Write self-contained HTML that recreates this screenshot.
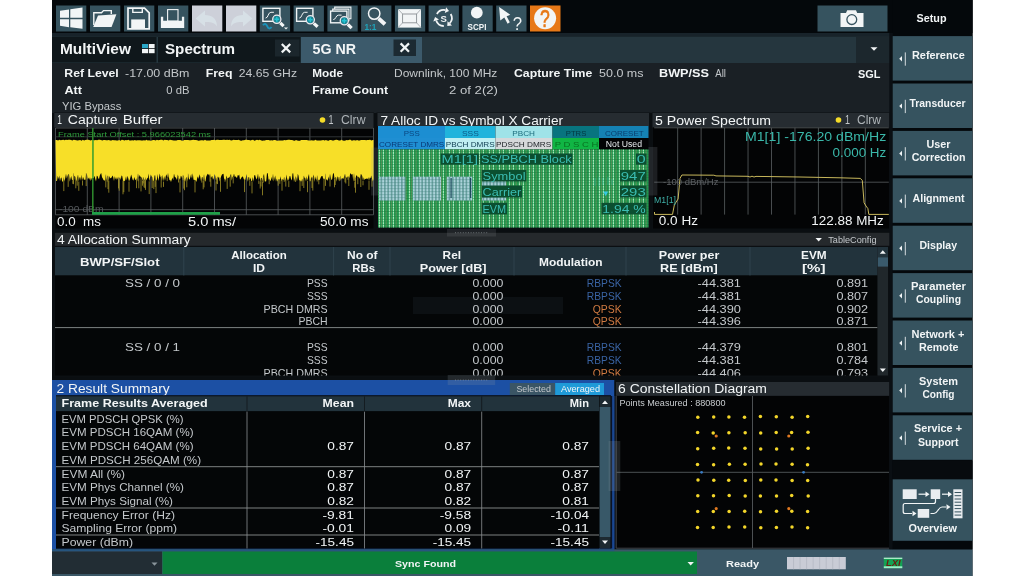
<!DOCTYPE html>
<html><head><meta charset="utf-8"><title>5G NR</title>
<style>
html,body{margin:0;padding:0;background:#fff;}
body{width:1024px;height:576px;overflow:hidden;}
svg{display:block;font-family:"Liberation Sans",sans-serif;will-change:transform;}
text{white-space:pre;}
</style></head><body>
<svg width="1024" height="576" viewBox="0 0 1024 576" shape-rendering="auto">
<rect x="0" y="0" width="1024" height="576" fill="#ffffff" />
<rect x="52" y="0" width="920.5" height="576" fill="#0a0e11" />
<rect x="52" y="0" width="920.5" height="33" fill="#04080b" />
<rect x="52" y="33" width="841" height="3.5" fill="#18232a" />
<rect x="56" y="5.5" width="30.3" height="26" fill="#36535f" />
<rect x="90" y="5.5" width="30.3" height="26" fill="#36535f" />
<rect x="124" y="5.5" width="30.3" height="26" fill="#36535f" />
<rect x="158" y="5.5" width="30.3" height="26" fill="#36535f" />
<rect x="192" y="5.5" width="30.3" height="26" fill="#cdd0d9" />
<rect x="226" y="5.5" width="30.3" height="26" fill="#cdd0d9" />
<rect x="259.8" y="5.5" width="30.3" height="26" fill="#36535f" />
<rect x="293.6" y="5.5" width="30.3" height="26" fill="#36535f" />
<rect x="327.4" y="5.5" width="30.3" height="26" fill="#36535f" />
<rect x="361.1" y="5.5" width="30.3" height="26" fill="#36535f" />
<rect x="394.9" y="5.5" width="30.3" height="26" fill="#36535f" />
<rect x="428.6" y="5.5" width="30.3" height="26" fill="#36535f" />
<rect x="462.4" y="5.5" width="30.3" height="26" fill="#36535f" />
<rect x="496.2" y="5.5" width="30.3" height="26" fill="#36535f" />
<rect x="530" y="5.5" width="30.5" height="26" fill="#e77817" />
<rect x="817.5" y="5.5" width="70" height="26" fill="#36535f" />
<path fill="#f2f5f6" d="M60 10.8L69 9.5V17.8H60zM60 19.2H69V27.2L60 25.8zM70.3 9.3L82.5 7.5V17.8H70.3zM70.3 19.2H82.5V28.8L70.3 27.3z"/>
<path fill="none" stroke="#f2f5f6" stroke-width="1.4" d="M93.8 25V12.8H101.5L103.5 10.6H111.3V14"/>
<path fill="#f2f5f6" d="M93.2 26.9L98 15.6L116.4 14.2L111.6 26.9z"/>
<path fill="none" stroke="#f2f5f6" stroke-width="1.7" d="M128 8.2H144.5L149.2 12.8V28.8H128z"/>
<path fill="none" stroke="#f2f5f6" stroke-width="1.4" d="M132.8 8.2V12.4H142.3V8.2"/>
<rect x="131.2" y="19.4" width="13.8" height="9.6" fill="#f2f5f6"/>
<path fill="#f2f5f6" d="M160.9 16.7H163.2V20.8H181.9V16.7H184.2V27.9H160.9z"/>
<rect x="167.6" y="9.6" width="10.4" height="11.5" fill="none" stroke="#f2f5f6" stroke-width="1.1"/>
<path fill="#d7e0e6" d="M195.6 18.5L205 10.6V15C212 15 216.8 18.5 217 26.4C214.5 22.6 211 21.8 205 22V26.4z"/>
<path fill="#d7e0e6" d="M252.4 18.5L243 10.6V15C236 15 231.2 18.5 231 26.4C233.5 22.6 237 21.8 243 22V26.4z"/>
<rect x="262.9" y="8.3" width="17.0" height="13.0" fill="none" stroke="#f2f5f6" stroke-width="1.4"/>
<path fill="none" stroke="#f2f5f6" stroke-width="1" d="M265.59999999999997 18.1C268.4 18.1 267.9 12.3 270.9 12.3H273.9"/>
<line x1="280.325" y1="22.825000000000003" x2="283.6" y2="26.1" stroke="#f2f5f6" stroke-width="3.2" stroke-linecap="butt"/>
<circle cx="276.8" cy="19.3" r="4.1000000000000005" fill="#1c8796" stroke="#f0e8ee" stroke-width="1.3"/>
<path stroke="#22c4d4" stroke-width="1.5" d="M274.45 19.3H279.15000000000003M276.8 16.95V21.650000000000002"/>
<path fill="none" stroke="#1a92ba" stroke-width="1.9" d="M263 25.2C264.5 23.2 266.2 23.6 267.2 26.2S270 29.2 271.6 27"/>
<path fill="#f2f5f6" d="M283.9 27.4H288.1L286 29.4z"/>
<rect x="296.6" y="8.3" width="16.299999999999955" height="13.0" fill="none" stroke="#f2f5f6" stroke-width="1.4"/>
<path fill="none" stroke="#f2f5f6" stroke-width="1" d="M299.3 18.1C302.1 18.1 301.6 12.3 304.6 12.3H307.6"/>
<line x1="313.825" y1="23.325000000000003" x2="317.6" y2="26.8" stroke="#f2f5f6" stroke-width="3.2" stroke-linecap="butt"/>
<circle cx="310.3" cy="19.8" r="4.1000000000000005" fill="#1c8796" stroke="#f0e8ee" stroke-width="1.3"/>
<path stroke="#22c4d4" stroke-width="1.5" d="M307.95 19.8H312.65000000000003M310.3 17.45V22.150000000000002"/>
<path fill="none" stroke="#f2f5f6" stroke-width="1.1" d="M334.7 9V7.1H350.9V18.8H349M332.7 11V9.1H348.9V20.8H347"/>
<rect x="330.6" y="11.1" width="16.299999999999955" height="11.700000000000001" fill="none" stroke="#f2f5f6" stroke-width="1.4"/>
<path fill="none" stroke="#f2f5f6" stroke-width="1" d="M333.3 19.6C336.1 19.6 335.6 15.1 338.6 15.1H341.6"/>
<line x1="347.825" y1="24.325000000000003" x2="351.6" y2="28.2" stroke="#f2f5f6" stroke-width="3.2" stroke-linecap="butt"/>
<circle cx="344.3" cy="20.8" r="4.1000000000000005" fill="#1c8796" stroke="#f0e8ee" stroke-width="1.3"/>
<path stroke="#22c4d4" stroke-width="1.5" d="M341.95 20.8H346.65000000000003M344.3 18.45V23.150000000000002"/>
<line x1="378.6" y1="18.4" x2="385" y2="24.2" stroke="#f2f5f6" stroke-width="4" stroke-linecap="butt"/>
<circle cx="374.2" cy="13.6" r="5.7" fill="none" stroke="#f2f5f6" stroke-width="1.5"/>
<text x="364.4" y="29.9" font-size="9.2" font-weight="bold" fill="#1fa4ba" textLength="12" lengthAdjust="spacingAndGlyphs">1:1</text>
<rect x="398.1" y="9.1" width="22.9" height="18.5" fill="#f2f5f6"/>
<rect x="402.6" y="14" width="14" height="8.8" fill="none" stroke="#8a9094" stroke-width="0.9"/>
<path stroke="#9aa0a4" stroke-width="0.8" d="M398.1 9.1L402.6 14M421 9.1L416.6 14M398.1 27.6L402.6 22.8M421 27.6L416.6 22.8"/>
<path fill="none" stroke="#f2f5f6" stroke-width="1.8" d="M436.9 14.0A8 8 0 0 1 445.5 10.2"/>
<path fill="#f2f5f6" d="M449.0 10.9L446.1 7.2L444.8 13.1z"/>
<path fill="none" stroke="#f2f5f6" stroke-width="1.8" d="M450.7 14.0A8 8 0 0 1 449.7 23.4"/>
<path fill="#f2f5f6" d="M447.3 26.0L452.0 25.4L447.5 21.3z"/>
<path fill="none" stroke="#f2f5f6" stroke-width="1.8" d="M443.8 26.0A8 8 0 0 1 436.2 20.5"/>
<path fill="#f2f5f6" d="M435.1 17.0L433.3 21.4L439.0 19.5z"/>
<text x="440.6" y="21.6" font-size="9.5" font-weight="bold" fill="#f2f5f6">S</text>
<circle cx="476.8" cy="12.7" r="5.9" fill="#f2f5f6"/>
<text x="467.6" y="29.6" font-size="9.5" font-weight="bold" fill="#f2f5f6" textLength="18.8" lengthAdjust="spacingAndGlyphs">SCPI</text>
<path fill="#f2f5f6" d="M499.1 7.1L510.3 14.8L506.6 16.3L509.8 22.3L507.6 23.8L504.3 17.6L500.3 20.4z"/>
<text x="512.8" y="29.6" font-size="18.5" fill="#f2f5f6" textLength="9.3" lengthAdjust="spacingAndGlyphs">?</text>
<circle cx="545.1" cy="18.3" r="11" fill="#f2f5f6"/>
<text x="540.1" y="26.9" font-size="23" fill="#e77817" stroke="#e77817" stroke-width="0.6" textLength="9.8" lengthAdjust="spacingAndGlyphs">?</text>
<path fill="#f2f5f6" d="M840.5 13H846L847.2 10.2H856L857.2 13H863.5V27H840.5z"/>
<circle cx="851.8" cy="19.6" r="4.9" fill="none" stroke="#36535f" stroke-width="1.3"/>
<rect x="52" y="36.5" width="841" height="26.5" fill="#25363e" />
<rect x="52" y="37" width="104.5" height="25.5" fill="#0f171b" />
<rect x="158" y="37" width="142.5" height="25.5" fill="#0f171b" />
<rect x="301" y="37" width="121" height="26.5" fill="#3c5a6b" />
<rect x="275" y="39.5" width="24.5" height="17" fill="#1b262c" />
<rect x="393.5" y="39.5" width="22.5" height="16.5" fill="#1c2a32" />
<rect x="856" y="36.5" width="37" height="26.5" fill="#1c272d" />
<text x="60" y="53.9" font-size="14.5" fill="#f2f5f6" font-weight="bold" textLength="71" lengthAdjust="spacingAndGlyphs" >MultiView</text>
<text x="165" y="53.9" font-size="14.5" fill="#f2f5f6" font-weight="bold" textLength="70" lengthAdjust="spacingAndGlyphs" >Spectrum</text>
<text x="312.5" y="53.9" font-size="14.5" fill="#f2f5f6" font-weight="bold" textLength="43.5" lengthAdjust="spacingAndGlyphs" >5G NR</text>
<rect x="142" y="44" width="6" height="4.2" fill="#2aa8c8" />
<rect x="148.8" y="44" width="5.8" height="4.2" fill="#f2f5f6" />
<rect x="142" y="49" width="6" height="4.2" fill="#f2f5f6" />
<rect x="148.8" y="49" width="5.8" height="4.2" fill="#f2f5f6" />
<line x1="281.8" y1="44" x2="290.2" y2="52.4" stroke="#f2f5f6" stroke-width="2.2" />
<line x1="281.8" y1="52.4" x2="290.2" y2="44" stroke="#f2f5f6" stroke-width="2.2" />
<line x1="400.6" y1="43.4" x2="409" y2="51.8" stroke="#f2f5f6" stroke-width="2.2" />
<line x1="400.6" y1="51.8" x2="409" y2="43.4" stroke="#f2f5f6" stroke-width="2.2" />
<path d="M870.5 47.2h7l-3.5 3.6z" fill="#f2f5f6"/>
<rect x="52" y="63" width="841" height="50" fill="#1a2025" />
<text x="64.3" y="77.3" font-size="11" fill="#f2f5f6" font-weight="bold" textLength="54.4" lengthAdjust="spacingAndGlyphs" >Ref Level</text>
<text x="125" y="77.3" font-size="11" fill="#c4c8cb" textLength="64.3" lengthAdjust="spacingAndGlyphs" >-17.00 dBm</text>
<text x="205.8" y="77.3" font-size="11" fill="#f2f5f6" font-weight="bold" textLength="26.7" lengthAdjust="spacingAndGlyphs" >Freq</text>
<text x="238.8" y="77.3" font-size="11" fill="#c4c8cb" textLength="58.2" lengthAdjust="spacingAndGlyphs" >24.65 GHz</text>
<text x="312.3" y="77.3" font-size="11" fill="#f2f5f6" font-weight="bold" textLength="30.7" lengthAdjust="spacingAndGlyphs" >Mode</text>
<text x="394" y="77.3" font-size="11" fill="#c4c8cb" textLength="103.3" lengthAdjust="spacingAndGlyphs" >Downlink, 100 MHz</text>
<text x="514" y="77.3" font-size="11" fill="#f2f5f6" font-weight="bold" textLength="78.3" lengthAdjust="spacingAndGlyphs" >Capture Time</text>
<text x="599" y="77.3" font-size="11" fill="#c4c8cb" textLength="44.5" lengthAdjust="spacingAndGlyphs" >50.0 ms</text>
<text x="659" y="77.3" font-size="11" fill="#f2f5f6" font-weight="bold" textLength="50" lengthAdjust="spacingAndGlyphs" >BWP/SS</text>
<text x="715.3" y="77.3" font-size="11" fill="#c4c8cb" textLength="10.7" lengthAdjust="spacingAndGlyphs" >All</text>
<text x="858" y="77.5" font-size="11" fill="#f2f5f6" font-weight="bold" textLength="22.5" lengthAdjust="spacingAndGlyphs" >SGL</text>
<text x="64.5" y="94" font-size="11" fill="#f2f5f6" font-weight="bold" textLength="17.5" lengthAdjust="spacingAndGlyphs" >Att</text>
<text x="166.3" y="94" font-size="11" fill="#c4c8cb" textLength="23.2" lengthAdjust="spacingAndGlyphs" >0 dB</text>
<text x="312.3" y="94" font-size="11" fill="#f2f5f6" font-weight="bold" textLength="75.7" lengthAdjust="spacingAndGlyphs" >Frame Count</text>
<text x="449" y="94" font-size="11" fill="#c4c8cb" textLength="49" lengthAdjust="spacingAndGlyphs" >2 of 2(2)</text>
<text x="62" y="109.8" font-size="11" fill="#c4c8cb" textLength="59.3" lengthAdjust="spacingAndGlyphs" >YIG Bypass</text>
<!--BODY-->
<rect x="54" y="112.5" width="320" height="116.5" fill="#0b0f12" />
<rect x="54.3" y="113" width="319.2" height="14.5" fill="#262c31" />
<rect x="55.5" y="127.5" width="318" height="101" fill="#030405" />
<text x="57.3" y="124.3" font-size="12" fill="#f2f5f6" textLength="4.7" lengthAdjust="spacingAndGlyphs" >1</text>
<text x="67.8" y="124.3" font-size="12" fill="#f2f5f6" textLength="49.8" lengthAdjust="spacingAndGlyphs" >Capture</text>
<text x="122.8" y="124.3" font-size="12" fill="#f2f5f6" textLength="39.8" lengthAdjust="spacingAndGlyphs" >Buffer</text>
<circle cx="322.5" cy="120" r="2.8" fill="#f5dc28"/>
<text x="328.5" y="124" font-size="12" fill="#c4c8cb" textLength="5" lengthAdjust="spacingAndGlyphs" >1</text>
<text x="341" y="124" font-size="12" fill="#aeb4b8" textLength="24.5" lengthAdjust="spacingAndGlyphs" >Clrw</text>
<line x1="55.5" y1="128" x2="55.5" y2="214.8" stroke="#5a5f62" stroke-width="0.8" />
<line x1="87.3" y1="128" x2="87.3" y2="214.8" stroke="#5a5f62" stroke-width="0.8" />
<line x1="119.1" y1="128" x2="119.1" y2="214.8" stroke="#5a5f62" stroke-width="0.8" />
<line x1="150.9" y1="128" x2="150.9" y2="214.8" stroke="#5a5f62" stroke-width="0.8" />
<line x1="182.7" y1="128" x2="182.7" y2="214.8" stroke="#5a5f62" stroke-width="0.8" />
<line x1="214.5" y1="128" x2="214.5" y2="214.8" stroke="#5a5f62" stroke-width="0.8" />
<line x1="246.3" y1="128" x2="246.3" y2="214.8" stroke="#5a5f62" stroke-width="0.8" />
<line x1="278.1" y1="128" x2="278.1" y2="214.8" stroke="#5a5f62" stroke-width="0.8" />
<line x1="309.9" y1="128" x2="309.9" y2="214.8" stroke="#5a5f62" stroke-width="0.8" />
<line x1="341.7" y1="128" x2="341.7" y2="214.8" stroke="#5a5f62" stroke-width="0.8" />
<line x1="373.5" y1="128" x2="373.5" y2="214.8" stroke="#5a5f62" stroke-width="0.8" />
<line x1="55.5" y1="128" x2="373.5" y2="128" stroke="#5a5f62" stroke-width="0.8" />
<line x1="55.5" y1="136.8" x2="373.5" y2="136.8" stroke="#3a3f42" stroke-width="0.8" />
<line x1="55.5" y1="209.7" x2="373.5" y2="209.7" stroke="#5a5f62" stroke-width="0.8" />
<line x1="55.5" y1="214.8" x2="373.5" y2="214.8" stroke="#5a5f62" stroke-width="0.8" />
<polygon fill="#f7df28" points="55.5,140.0 56.8,139.9 58.1,140.4 59.4,139.8 60.7,140.2 62.0,140.1 63.3,139.8 64.6,140.2 65.9,139.7 67.2,140.1 68.5,139.8 69.8,139.8 71.1,140.1 72.4,140.5 73.7,139.8 75.0,139.9 76.3,140.3 77.6,140.6 78.9,140.3 80.2,140.1 81.5,140.7 82.8,139.7 84.1,140.6 85.4,140.0 86.7,139.8 88.0,139.8 89.3,140.0 90.6,140.5 91.9,139.9 93.2,140.3 94.5,140.3 95.8,140.1 97.1,140.2 98.4,139.8 99.7,139.8 101.0,139.9 102.3,140.4 103.6,140.1 104.9,140.0 106.2,140.3 107.5,140.2 108.8,140.0 110.1,140.5 111.4,140.4 112.7,139.9 114.0,140.3 115.3,140.2 116.6,140.6 117.9,140.4 119.2,140.0 120.5,140.7 121.8,139.8 123.1,140.1 124.4,140.5 125.7,139.9 127.0,140.2 128.3,139.7 129.6,140.4 130.9,140.5 132.2,140.3 133.5,140.6 134.8,140.0 136.1,140.4 137.4,140.3 138.7,140.3 140.0,140.2 141.3,140.5 142.6,140.6 143.9,140.2 145.2,140.4 146.5,139.8 147.8,140.4 149.1,140.3 150.4,140.7 151.7,140.5 153.0,140.0 154.3,140.1 155.6,140.4 156.9,139.7 158.2,140.2 159.5,139.9 160.8,139.8 162.1,139.8 163.4,140.5 164.7,139.8 166.0,139.9 167.3,140.1 168.6,140.6 169.9,139.8 171.2,140.1 172.5,140.2 173.8,140.6 175.1,140.5 176.4,140.6 177.7,140.0 179.0,140.1 180.3,140.1 181.6,140.6 182.9,140.7 184.2,139.9 185.5,139.9 186.8,139.9 188.1,139.9 189.4,140.2 190.7,140.3 192.0,140.0 193.3,139.7 194.6,140.1 195.9,140.1 197.2,140.3 198.5,140.7 199.8,140.4 201.1,140.2 202.4,140.3 203.7,140.4 205.0,139.8 206.3,140.6 207.6,140.5 208.9,140.6 210.2,140.5 211.5,140.1 212.8,140.1 214.1,139.8 215.4,140.3 216.7,139.8 218.0,139.8 219.3,139.9 220.6,139.9 221.9,140.0 223.2,139.8 224.5,139.7 225.8,139.9 227.1,139.8 228.4,140.1 229.7,139.7 231.0,140.6 232.3,140.3 233.6,139.8 234.9,140.0 236.2,140.0 237.5,140.1 238.8,139.8 240.1,140.5 241.4,140.7 242.7,140.2 244.0,140.2 245.3,139.8 246.6,139.8 247.9,140.0 249.2,140.0 250.5,140.5 251.8,139.9 253.1,139.7 254.4,140.7 255.7,140.2 257.0,139.8 258.3,140.2 259.6,139.7 260.9,140.2 262.2,140.7 263.5,140.6 264.8,140.4 266.1,140.0 267.4,140.1 268.7,139.9 270.0,140.5 271.3,140.2 272.6,140.5 273.9,140.0 275.2,139.9 276.5,140.5 277.8,140.7 279.1,140.6 280.4,140.5 281.7,140.5 283.0,140.4 284.3,139.9 285.6,140.2 286.9,140.1 288.2,139.7 289.5,139.7 290.8,140.0 292.1,140.0 293.4,140.4 294.7,140.7 296.0,140.1 297.3,140.6 298.6,140.7 299.9,140.7 301.2,140.1 302.5,139.9 303.8,139.9 305.1,139.9 306.4,139.9 307.7,140.3 309.0,140.6 310.3,140.5 311.6,140.2 312.9,140.4 314.2,140.5 315.5,139.8 316.8,140.4 318.1,140.6 319.4,140.5 320.7,140.5 322.0,140.2 323.3,139.9 324.6,140.5 325.9,140.0 327.2,140.5 328.5,140.7 329.8,140.1 331.1,140.1 332.4,140.6 333.7,140.4 335.0,139.9 336.3,139.8 337.6,139.9 338.9,140.6 340.2,140.5 341.5,139.8 342.8,140.5 344.1,140.7 345.4,140.4 346.7,140.1 348.0,140.2 349.3,139.8 350.6,139.7 351.9,140.7 353.2,140.3 354.5,140.2 355.8,140.6 357.1,140.1 358.4,140.6 359.7,140.5 361.0,139.9 362.3,140.0 363.6,140.0 364.9,139.9 366.2,140.3 367.5,140.0 368.8,140.1 370.1,139.8 371.4,140.6 372.7,140.1 373.5,140.0 373.5,179.3 372.8,181.5 372.0,178.9 371.2,175.5 370.5,178.6 369.8,177.6 369.0,180.6 368.2,177.3 367.5,179.2 366.8,178.4 366.0,178.8 365.2,179.0 364.5,180.0 363.8,177.2 363.0,181.0 362.2,176.0 361.5,174.6 360.8,174.3 360.0,176.9 359.2,178.7 358.5,176.5 357.8,177.7 357.0,175.6 356.2,175.6 355.5,178.8 354.8,181.8 354.0,173.5 353.2,180.8 352.5,174.1 351.8,174.4 351.0,174.3 350.2,173.1 349.5,177.7 348.8,177.2 348.0,176.2 347.2,177.5 346.5,177.4 345.8,177.8 345.0,174.1 344.2,176.2 343.5,178.7 342.8,178.8 342.0,177.7 341.2,179.6 340.5,175.9 339.8,177.2 339.0,181.2 338.2,177.1 337.5,176.5 336.8,181.8 336.0,177.1 335.2,177.8 334.5,178.8 333.8,173.2 333.0,173.6 332.2,178.9 331.5,180.2 330.8,177.6 330.0,174.3 329.2,179.6 328.5,176.4 327.8,180.9 327.0,179.3 326.2,180.0 325.5,173.7 324.8,179.6 324.0,178.7 323.2,178.8 322.5,175.9 321.8,176.0 321.0,176.8 320.2,178.7 319.5,179.9 318.8,179.7 318.0,180.3 317.2,175.6 316.5,180.0 315.8,178.9 315.0,176.3 314.2,181.9 313.5,174.6 312.8,177.2 312.0,179.3 311.2,176.4 310.5,181.3 309.8,181.3 309.0,174.0 308.2,176.4 307.5,181.0 306.8,176.3 306.0,181.4 305.2,178.1 304.5,177.8 303.8,175.8 303.0,181.6 302.2,178.8 301.5,181.2 300.8,181.4 300.0,180.2 299.2,180.4 298.5,175.8 297.8,173.7 297.0,181.8 296.2,177.5 295.5,176.6 294.8,178.7 294.0,182.0 293.2,173.2 292.5,173.5 291.8,180.4 291.0,178.9 290.2,175.9 289.5,176.3 288.8,181.1 288.0,178.1 287.2,181.0 286.5,174.4 285.8,179.3 285.0,180.9 284.2,177.1 283.5,179.9 282.8,179.7 282.0,179.1 281.2,181.5 280.5,176.3 279.8,180.0 279.0,179.3 278.2,179.4 277.5,181.7 276.8,178.6 276.0,181.7 275.2,175.6 274.5,178.2 273.8,181.5 273.0,173.8 272.2,180.7 271.5,176.8 270.8,180.8 270.0,180.4 269.2,178.7 268.5,179.8 267.8,173.4 267.0,173.1 266.2,181.2 265.5,181.6 264.8,181.6 264.0,173.8 263.2,176.6 262.5,181.7 261.8,177.8 261.0,178.3 260.2,181.5 259.5,175.7 258.8,180.5 258.0,173.5 257.2,177.7 256.5,179.5 255.8,177.6 255.0,174.8 254.2,175.7 253.5,181.7 252.8,177.1 252.0,181.5 251.2,180.8 250.5,177.6 249.8,180.6 249.0,177.1 248.2,177.6 247.5,181.9 246.8,174.0 246.0,177.0 245.2,179.9 244.5,179.8 243.8,179.2 243.0,176.8 242.2,176.5 241.5,177.6 240.8,178.8 240.0,179.7 239.2,174.6 238.5,175.8 237.8,174.9 237.0,177.9 236.2,177.2 235.5,176.2 234.8,176.9 234.0,173.5 233.2,176.8 232.5,176.7 231.8,180.7 231.0,173.8 230.2,176.1 229.5,177.3 228.8,177.5 228.0,178.2 227.2,177.9 226.5,175.5 225.8,180.8 225.0,178.5 224.2,179.7 223.5,173.7 222.8,174.0 222.0,174.6 221.2,176.3 220.5,178.6 219.8,181.4 219.0,176.5 218.2,178.1 217.5,176.7 216.8,178.0 216.0,181.3 215.2,175.7 214.5,174.1 213.8,178.2 213.0,179.8 212.2,175.7 211.5,177.0 210.8,178.5 210.0,173.9 209.2,175.8 208.5,174.6 207.8,173.8 207.0,175.0 206.2,176.8 205.5,181.7 204.8,180.6 204.0,174.5 203.2,180.8 202.5,176.9 201.8,177.6 201.0,181.6 200.2,176.6 199.5,174.3 198.8,179.1 198.0,176.2 197.2,178.1 196.5,181.9 195.8,180.5 195.0,180.3 194.2,179.7 193.5,179.8 192.8,173.3 192.0,178.8 191.2,174.3 190.5,176.2 189.8,179.3 189.0,179.6 188.2,173.5 187.5,181.2 186.8,177.2 186.0,177.8 185.2,181.6 184.5,181.4 183.8,177.0 183.0,174.9 182.2,178.8 181.5,176.6 180.8,175.8 180.0,180.2 179.2,178.5 178.5,177.0 177.8,174.5 177.0,180.1 176.2,178.3 175.5,177.2 174.8,176.9 174.0,173.5 173.2,180.3 172.5,177.6 171.8,179.6 171.0,181.9 170.2,180.0 169.5,180.2 168.8,176.9 168.0,173.3 167.2,177.7 166.5,174.3 165.8,175.9 165.0,180.8 164.2,175.9 163.5,181.6 162.8,174.7 162.0,180.9 161.2,176.1 160.5,177.6 159.8,173.6 159.0,177.6 158.2,181.0 157.5,173.9 156.8,180.1 156.0,181.1 155.2,175.5 154.5,175.5 153.8,180.7 153.0,180.9 152.2,177.3 151.5,176.2 150.8,174.4 150.0,177.8 149.2,181.3 148.5,173.5 147.8,178.0 147.0,178.5 146.2,180.4 145.5,177.6 144.8,180.3 144.0,179.3 143.2,177.0 142.5,181.0 141.8,177.6 141.0,177.6 140.2,176.2 139.5,175.0 138.8,178.3 138.0,173.8 137.2,180.0 136.5,178.5 135.8,180.3 135.0,179.2 134.2,177.0 133.5,180.5 132.8,179.9 132.0,177.5 131.2,174.6 130.5,177.1 129.8,179.5 129.0,181.5 128.2,178.0 127.5,175.7 126.8,180.6 126.0,176.2 125.2,180.2 124.5,180.9 123.8,181.7 123.0,180.5 122.2,175.9 121.5,175.6 120.8,180.0 120.0,177.0 119.2,178.9 118.5,176.9 117.8,179.6 117.0,177.0 116.2,179.7 115.5,178.5 114.8,176.3 114.0,181.0 113.2,177.1 112.5,175.5 111.8,177.1 111.0,178.3 110.2,177.9 109.5,175.9 108.8,180.6 108.0,175.6 107.2,177.1 106.5,180.5 105.8,174.6 105.0,180.6 104.2,180.6 103.5,180.0 102.8,178.4 102.0,177.2 101.2,173.1 100.5,174.0 99.8,175.5 99.0,179.2 98.2,177.9 97.5,176.0 96.8,175.7 96.0,181.6 95.2,178.8 94.5,175.7 93.8,177.7 93.0,178.6 92.2,176.9 91.5,179.1 90.8,180.9 90.0,177.3 89.2,179.8 88.5,177.6 87.8,179.6 87.0,174.8 86.2,173.0 85.5,179.8 84.8,179.5 84.0,180.0 83.2,176.9 82.5,180.5 81.8,174.8 81.0,180.8 80.2,177.2 79.5,177.6 78.8,181.6 78.0,174.6 77.2,178.4 76.5,181.6 75.8,178.2 75.0,176.5 74.2,176.3 73.5,173.3 72.8,180.3 72.0,180.1 71.2,176.0 70.5,178.5 69.8,181.8 69.0,174.3 68.2,174.5 67.5,175.9 66.8,178.4 66.0,173.7 65.2,178.2 64.5,181.6 63.8,177.4 63.0,180.9 62.2,181.9 61.5,177.5 60.8,177.9 60.0,181.3 59.2,175.5 58.5,179.3 57.8,175.8 57.0,181.1 56.2,181.0"/>
<path stroke="#b9a62e" stroke-width="0.7" fill="none" d="M372.0 178.9V186.7M369.0 180.6V189.8M363.0 181.0V185.3M360.8 174.3V187.0M357.8 177.7V184.2M355.5 178.8V192.7M354.8 181.8V187.7M354.0 173.5V181.2M348.8 177.2V186.0M348.0 176.2V179.8M345.8 177.8V183.5M345.0 174.1V182.3M340.5 175.9V179.6M339.8 177.2V181.1M335.2 177.8V185.0M334.5 178.8V187.3M330.0 174.3V186.5M325.5 173.7V185.9M324.0 178.7V190.5M318.8 179.7V184.3M317.2 175.6V181.5M312.8 177.2V190.6M312.0 179.3V188.0M307.5 181.0V192.2M303.8 175.8V188.0M302.2 178.8V185.9M300.0 180.2V191.2M295.5 176.6V181.9M288.8 181.1V187.1M285.8 179.3V186.6M284.2 177.1V181.8M282.0 179.1V190.7M279.8 180.0V183.8M278.2 179.4V185.7M269.2 178.7V184.2M263.2 176.6V182.7M262.5 181.7V195.3M261.0 178.3V186.5M260.2 181.5V188.5M258.8 180.5V183.9M252.0 181.5V193.4M249.8 180.6V185.8M249.0 177.1V180.5M244.5 179.8V192.1M233.2 176.8V183.4M230.2 176.1V186.7M227.2 177.9V188.9M225.0 178.5V181.7M220.5 178.6V191.8M217.5 176.7V184.1M216.8 178.0V183.7M216.0 181.3V190.5M210.8 178.5V186.7M210.0 173.9V181.7M204.0 174.5V187.4M203.2 180.8V189.3M201.8 177.6V182.6M195.0 180.3V192.4M191.2 174.3V177.3M188.2 173.5V177.5M186.8 177.2V187.3M184.5 181.4V190.2M183.8 177.0V188.6M183.0 174.9V180.1M180.0 180.2V192.4M178.5 177.0V182.5M168.0 173.3V177.5M167.2 177.7V181.1M163.5 181.6V186.9M161.2 176.1V187.5M156.0 181.1V193.1M155.2 175.5V186.9M153.8 180.7V189.1M152.2 177.3V188.0M149.2 181.3V194.1M145.5 177.6V189.9M144.8 180.3V188.1M144.0 179.3V187.3M143.2 177.0V183.4M142.5 181.0V185.7M141.0 177.6V191.4M138.8 178.3V188.3M138.0 173.8V181.2M136.5 178.5V188.2M129.0 181.5V191.7M123.8 181.7V192.2M123.0 180.5V194.3M119.2 178.9V190.7M118.5 176.9V188.4M108.8 180.6V192.7M108.0 175.6V189.1M107.2 177.1V181.7M105.8 174.6V187.4M86.2 173.0V186.1M82.5 180.5V185.5M78.8 181.6V190.8M77.2 178.4V185.7M75.8 178.2V188.3M75.0 176.5V179.5M73.5 173.3V184.2M72.8 180.3V183.8M68.2 174.5V186.9M63.8 177.4V191.1"/>
<text x="58" y="136.9" font-size="7.8" fill="#2f9a3c" textLength="153" lengthAdjust="spacingAndGlyphs" >Frame Start Offset : 5.966023542 ms</text>
<text x="59" y="212.3" font-size="9" fill="#54585b" textLength="44.5" lengthAdjust="spacingAndGlyphs" >-100 dBm</text>
<line x1="92.8" y1="128" x2="92.8" y2="214.5" stroke="#2f8c2e" stroke-width="1.5" />
<line x1="92.8" y1="140" x2="92.8" y2="178" stroke="#5cae2c" stroke-width="1.5" />
<line x1="92" y1="213.3" x2="220" y2="213.3" stroke="#1fa048" stroke-width="2.8" />
<text x="57" y="225.5" font-size="12" fill="#f2f5f6" textLength="44" lengthAdjust="spacingAndGlyphs" >0.0  ms</text>
<text x="188" y="225.5" font-size="12" fill="#f2f5f6" textLength="48" lengthAdjust="spacingAndGlyphs" >5.0 ms/</text>
<text x="320" y="225.5" font-size="12" fill="#f2f5f6" textLength="48.5" lengthAdjust="spacingAndGlyphs" >50.0 ms</text>
<rect x="376.5" y="112.5" width="274" height="116.5" fill="#0b0f12" />
<rect x="377.5" y="113" width="271.5" height="13" fill="#262c31" />
<text x="380.5" y="124.5" font-size="12" fill="#f2f5f6" textLength="182.5" lengthAdjust="spacingAndGlyphs" >7 Alloc ID vs Symbol X Carrier</text>
<rect x="378" y="126" width="67" height="12" fill="#1c8ed2" />
<rect x="445" y="126" width="50.5" height="12" fill="#20b4dc" />
<rect x="495.5" y="126" width="57" height="12" fill="#9fe3e8" />
<rect x="552.5" y="126" width="46.5" height="12" fill="#08747f" />
<rect x="599" y="126" width="49.5" height="12" fill="#1582b4" />
<rect x="378" y="138" width="67" height="11.5" fill="#1f8fd3" />
<rect x="445" y="138" width="50.5" height="11.5" fill="#bfeff2" />
<rect x="495.5" y="138" width="57" height="11.5" fill="#d6d8da" />
<rect x="552.5" y="138" width="46.5" height="11.5" fill="#10b544" />
<rect x="599" y="138" width="49.5" height="11.5" fill="#030405" />
<defs>
<pattern id="gv" x="378" y="149.5" width="10" height="2.6" patternUnits="userSpaceOnUse">
<rect x="0.9" y="0" width="1.1" height="2.6" fill="#6cc88c"/>
<rect x="4.9" y="0" width="1.1" height="2.6" fill="#6cc88c"/>
<rect x="0.9" y="0.2" width="1.1" height="1.3" fill="#c4f2cc"/>
<rect x="4.9" y="0.2" width="1.1" height="1.3" fill="#c4f2cc"/>
<rect x="2.8" y="0" width="1.2" height="2.6" fill="#7a8f60" fill-opacity="0.6"/>
<rect x="7.6" y="0" width="1.2" height="2.6" fill="#7a8f60" fill-opacity="0.6"/>
</pattern>
<pattern id="gh" x="378" y="149.5" width="10" height="2.6" patternUnits="userSpaceOnUse">
<rect x="0" y="1.9" width="10" height="0.7" fill="#043a18" fill-opacity="0.22"/>
</pattern>
<pattern id="sv" x="378" y="176.6" width="3.4" height="3" patternUnits="userSpaceOnUse">
<rect x="0" y="0" width="3.4" height="3" fill="#3d7f7a"/>
<rect x="0.5" y="0.4" width="2.4" height="2.1" fill="#c6e7f1"/>
</pattern>
</defs>
<rect x="378" y="149.5" width="270.5" height="78" fill="#1f9a4e"/>
<rect x="378" y="149.5" width="270.5" height="78" fill="url(#gv)"/>
<rect x="378" y="149.5" width="270.5" height="78" fill="url(#gh)"/>
<rect x="379" y="176.6" width="26.5" height="24" fill="url(#sv)"/>
<rect x="412.7" y="176.6" width="28.30000000000001" height="24" fill="url(#sv)"/>
<rect x="446.7" y="176.6" width="25.600000000000023" height="24" fill="url(#sv)"/>
<rect x="482" y="176.6" width="24" height="24" fill="url(#sv)"/>
<rect x="450.5" y="178" width="1.2" height="20" fill="#1c4a5a"/><rect x="470" y="178" width="1.2" height="20" fill="#1c4a5a"/>
<text x="403.8" y="135.5" font-size="8" fill="#0a4680" textLength="15.9" lengthAdjust="spacingAndGlyphs" >PSS</text>
<text x="461.9" y="135.5" font-size="8" fill="#0a5a88" textLength="16.9" lengthAdjust="spacingAndGlyphs" >SSS</text>
<text x="512.3" y="135.5" font-size="8" fill="#1d6e7e" textLength="22.7" lengthAdjust="spacingAndGlyphs" >PBCH</text>
<text x="565.8" y="135.5" font-size="8" fill="#033840" textLength="20.5" lengthAdjust="spacingAndGlyphs" >PTRS</text>
<text x="604.9" y="135.5" font-size="8" fill="#0a4070" textLength="38.8" lengthAdjust="spacingAndGlyphs" >CORESET</text>
<text x="379" y="146.8" font-size="8" fill="#0a3a78" textLength="65.3" lengthAdjust="spacingAndGlyphs" >CORESET DMRS</text>
<text x="445.8" y="146.8" font-size="8" fill="#0f3c50" textLength="48.9" lengthAdjust="spacingAndGlyphs" >PBCH DMRS</text>
<text x="496" y="146.8" font-size="8" fill="#23272b" textLength="55.3" lengthAdjust="spacingAndGlyphs" >PDSCH DMRS</text>
<text x="554.7" y="146.8" font-size="8" fill="#087020" textLength="43.8" lengthAdjust="spacingAndGlyphs" >P D S C H</text>
<text x="605.8" y="146.8" font-size="8.5" fill="#e8ecee" textLength="36.2" lengthAdjust="spacingAndGlyphs" >Not Used</text>
<rect x="440.7" y="153.5" width="38.1" height="11.2" fill="#0b4f30" />
<text x="441.5" y="163" font-size="11.2" fill="#3bbdb2" textLength="36.5" lengthAdjust="spacingAndGlyphs" >M1[1]</text>
<rect x="480.3" y="153.5" width="92.2" height="11.2" fill="#0b4f30" />
<text x="481.1" y="163" font-size="11.2" fill="#3bbdb2" textLength="90.6" lengthAdjust="spacingAndGlyphs" >SS/PBCH Block</text>
<rect x="636" y="153.5" width="10.5" height="11.2" fill="#0b4f30" />
<text x="636.8" y="163" font-size="11.2" fill="#3bbdb2" textLength="8.9" lengthAdjust="spacingAndGlyphs" >0</text>
<rect x="481.8" y="170" width="44.5" height="11.5" fill="#0b4f30" />
<text x="482.6" y="179.8" font-size="11.2" fill="#3bbdb2" textLength="42.9" lengthAdjust="spacingAndGlyphs" >Symbol</text>
<rect x="620" y="170" width="26.5" height="11.5" fill="#0b4f30" />
<text x="620.8" y="179.8" font-size="11.2" fill="#3bbdb2" textLength="24.9" lengthAdjust="spacingAndGlyphs" >947</text>
<rect x="481.8" y="185.6" width="40.2" height="11.9" fill="#0b4f30" />
<text x="482.6" y="195.8" font-size="11.2" fill="#3bbdb2" textLength="38.6" lengthAdjust="spacingAndGlyphs" >Carrier</text>
<rect x="620" y="185.6" width="26.5" height="11.9" fill="#0b4f30" />
<text x="620.8" y="195.8" font-size="11.2" fill="#3bbdb2" textLength="24.9" lengthAdjust="spacingAndGlyphs" >293</text>
<rect x="481.8" y="202.7" width="25.2" height="11.7" fill="#0b4f30" />
<text x="482.6" y="212.7" font-size="11.2" fill="#3bbdb2" textLength="23.6" lengthAdjust="spacingAndGlyphs" >EVM</text>
<rect x="601.5" y="202.7" width="45" height="11.7" fill="#0b4f30" />
<text x="602.3" y="212.7" font-size="11.2" fill="#3bbdb2" textLength="43.4" lengthAdjust="spacingAndGlyphs" >1.94 %</text>
<rect x="651.5" y="112.5" width="239" height="116.5" fill="#0b0f12" />
<rect x="652.5" y="113" width="237" height="14.5" fill="#262c31" />
<rect x="653" y="127.5" width="236" height="101" fill="#030405" />
<text x="655" y="124.5" font-size="12" fill="#f2f5f6" textLength="116" lengthAdjust="spacingAndGlyphs" >5 Power Spectrum</text>
<circle cx="838.5" cy="120" r="2.8" fill="#f5dc28"/>
<text x="845" y="124" font-size="12" fill="#c4c8cb" textLength="5" lengthAdjust="spacingAndGlyphs" >1</text>
<text x="857" y="124" font-size="12" fill="#aeb4b8" textLength="24" lengthAdjust="spacingAndGlyphs" >Clrw</text>
<!--PSPEC-->
<line x1="677.66" y1="127.8" x2="677.66" y2="214.6" stroke="#5a5f62" stroke-width="0.8" />
<line x1="701.12" y1="127.8" x2="701.12" y2="214.6" stroke="#5a5f62" stroke-width="0.8" />
<line x1="724.58" y1="127.8" x2="724.58" y2="214.6" stroke="#5a5f62" stroke-width="0.8" />
<line x1="748.04" y1="127.8" x2="748.04" y2="214.6" stroke="#5a5f62" stroke-width="0.8" />
<line x1="771.5" y1="127.8" x2="771.5" y2="214.6" stroke="#5a5f62" stroke-width="0.8" />
<line x1="794.96" y1="127.8" x2="794.96" y2="214.6" stroke="#5a5f62" stroke-width="0.8" />
<line x1="818.42" y1="127.8" x2="818.42" y2="214.6" stroke="#5a5f62" stroke-width="0.8" />
<line x1="841.88" y1="127.8" x2="841.88" y2="214.6" stroke="#5a5f62" stroke-width="0.8" />
<line x1="865.34" y1="127.8" x2="865.34" y2="214.6" stroke="#5a5f62" stroke-width="0.8" />
<line x1="654.2" y1="127.8" x2="888.8" y2="127.8" stroke="#5a5f62" stroke-width="0.8" />
<line x1="654.2" y1="182.2" x2="888.8" y2="182.2" stroke="#5a5f62" stroke-width="0.8" />
<polyline fill="none" stroke="#d2c160" stroke-width="0.95" points="654.5,212 654.5,214.4 672.5,214.4 674.4,204.7 678.1,199 680,178.4 681.9,175 713.8,175.2 716,175.9 748,176.3 750,177 752,176.2 754,177 756,176.4 800,177 840,177.8 860.4,178.4 862.3,180.5 864.1,202.8 866,206 867.9,208.6 868.8,214.4 888.8,214.4"/>
<text x="663" y="185.2" font-size="9" fill="#5d6164" textLength="55.5" lengthAdjust="spacingAndGlyphs" >-100 dBm/Hz</text>
<text x="654" y="203" font-size="9" fill="#3fb0a8" textLength="22" lengthAdjust="spacingAndGlyphs" >M1[1]</text>
<text x="745" y="140.8" font-size="12" fill="#3ab8aa" textLength="141.3" lengthAdjust="spacingAndGlyphs" >M1[1] -176.20 dBm/Hz</text>
<text x="832.5" y="157.3" font-size="12" fill="#3ab8aa" textLength="53.8" lengthAdjust="spacingAndGlyphs" >0.000 Hz</text>
<text x="658.8" y="225.3" font-size="12" fill="#f2f5f6" textLength="39.2" lengthAdjust="spacingAndGlyphs" >0.0 Hz</text>
<text x="811.3" y="225.3" font-size="12" fill="#f2f5f6" textLength="72.5" lengthAdjust="spacingAndGlyphs" >122.88 MHz</text>
<rect x="54" y="232.5" width="837" height="144.5" fill="#0b0f12" />
<rect x="55" y="232.8" width="835.5" height="13" fill="#25292c" />
<text x="57" y="243.6" font-size="12" fill="#f2f5f6" textLength="133.8" lengthAdjust="spacingAndGlyphs" >4 Allocation Summary</text>
<path d="M815.5 238h6.4l-3.2 3.4z" fill="#f2f5f6"/>
<text x="828.3" y="243" font-size="9" fill="#c4c8cb" textLength="48.2" lengthAdjust="spacingAndGlyphs" >TableConfig</text>
<rect x="55" y="247" width="822.5" height="28.5" fill="#22333c" />
<rect x="55" y="275.5" width="822.5" height="100" fill="#040607" />
<line x1="183.8" y1="247" x2="183.8" y2="275.5" stroke="#2f434d" stroke-width="1" />
<line x1="333.6" y1="247" x2="333.6" y2="275.5" stroke="#2f434d" stroke-width="1" />
<line x1="390" y1="247" x2="390" y2="275.5" stroke="#2f434d" stroke-width="1" />
<line x1="514" y1="247" x2="514" y2="275.5" stroke="#2f434d" stroke-width="1" />
<line x1="626" y1="247" x2="626" y2="275.5" stroke="#2f434d" stroke-width="1" />
<line x1="750" y1="247" x2="750" y2="275.5" stroke="#2f434d" stroke-width="1" />
<text x="80" y="266" font-size="11" fill="#f2f5f6" font-weight="bold" textLength="79.5" lengthAdjust="spacingAndGlyphs" >BWP/SF/Slot</text>
<text x="231.3" y="259.2" font-size="11" fill="#f2f5f6" font-weight="bold" textLength="55.5" lengthAdjust="spacingAndGlyphs" >Allocation</text>
<text x="253" y="272.1" font-size="11" fill="#f2f5f6" font-weight="bold" textLength="12" lengthAdjust="spacingAndGlyphs" >ID</text>
<text x="347" y="259.2" font-size="11" fill="#f2f5f6" font-weight="bold" textLength="30.6" lengthAdjust="spacingAndGlyphs" >No of</text>
<text x="352.3" y="272.1" font-size="11" fill="#f2f5f6" font-weight="bold" textLength="22.7" lengthAdjust="spacingAndGlyphs" >RBs</text>
<text x="442.6" y="259.2" font-size="11" fill="#f2f5f6" font-weight="bold" textLength="18.4" lengthAdjust="spacingAndGlyphs" >Rel</text>
<text x="419.8" y="272.1" font-size="11" fill="#f2f5f6" font-weight="bold" textLength="66.8" lengthAdjust="spacingAndGlyphs" >Power [dB]</text>
<text x="539" y="266" font-size="11" fill="#f2f5f6" font-weight="bold" textLength="63.6" lengthAdjust="spacingAndGlyphs" >Modulation</text>
<text x="658.8" y="259.2" font-size="11" fill="#f2f5f6" font-weight="bold" textLength="60.5" lengthAdjust="spacingAndGlyphs" >Power per</text>
<text x="660" y="272.1" font-size="11" fill="#f2f5f6" font-weight="bold" textLength="57.6" lengthAdjust="spacingAndGlyphs" >RE [dBm]</text>
<text x="801" y="259.2" font-size="11" fill="#f2f5f6" font-weight="bold" textLength="25.6" lengthAdjust="spacingAndGlyphs" >EVM</text>
<text x="802" y="272.1" font-size="11" fill="#f2f5f6" font-weight="bold" textLength="23.5" lengthAdjust="spacingAndGlyphs" >[%]</text>
<rect x="413" y="297" width="150" height="17" fill="#0c1013" />
<clipPath id="c1"><rect x="56" y="275.5" width="822" height="100"/></clipPath><g clip-path="url(#c1)">
<text x="125" y="286.8" font-size="11" fill="#c4c8cb" textLength="55" lengthAdjust="spacingAndGlyphs" >SS / 0 / 0</text>
<text x="307" y="286.8" font-size="11" fill="#c4c8cb" textLength="20.6" lengthAdjust="spacingAndGlyphs" >PSS</text>
<text x="472.5" y="286.8" font-size="11" fill="#c4c8cb" textLength="30.9" lengthAdjust="spacingAndGlyphs" >0.000</text>
<text x="586.8" y="286.8" font-size="11" fill="#3a64a4" textLength="34.8" lengthAdjust="spacingAndGlyphs" >RBPSK</text>
<text x="697.5" y="286.8" font-size="11" fill="#c4c8cb" textLength="43.5" lengthAdjust="spacingAndGlyphs" >-44.381</text>
<text x="836.4" y="286.8" font-size="11" fill="#c4c8cb" textLength="31.6" lengthAdjust="spacingAndGlyphs" >0.891</text>
<text x="307" y="299.65" font-size="11" fill="#c4c8cb" textLength="20.6" lengthAdjust="spacingAndGlyphs" >SSS</text>
<text x="472.5" y="299.65" font-size="11" fill="#c4c8cb" textLength="30.9" lengthAdjust="spacingAndGlyphs" >0.000</text>
<text x="586.8" y="299.65" font-size="11" fill="#3a64a4" textLength="34.8" lengthAdjust="spacingAndGlyphs" >RBPSK</text>
<text x="697.5" y="299.65" font-size="11" fill="#c4c8cb" textLength="43.5" lengthAdjust="spacingAndGlyphs" >-44.381</text>
<text x="836.4" y="299.65" font-size="11" fill="#c4c8cb" textLength="31.6" lengthAdjust="spacingAndGlyphs" >0.807</text>
<text x="263.6" y="312.5" font-size="11" fill="#c4c8cb" textLength="64" lengthAdjust="spacingAndGlyphs" >PBCH DMRS</text>
<text x="472.5" y="312.5" font-size="11" fill="#c4c8cb" textLength="30.9" lengthAdjust="spacingAndGlyphs" >0.000</text>
<text x="592.7" y="312.5" font-size="11" fill="#cf7a42" textLength="28.9" lengthAdjust="spacingAndGlyphs" >QPSK</text>
<text x="697.5" y="312.5" font-size="11" fill="#c4c8cb" textLength="43.5" lengthAdjust="spacingAndGlyphs" >-44.390</text>
<text x="836.4" y="312.5" font-size="11" fill="#c4c8cb" textLength="31.6" lengthAdjust="spacingAndGlyphs" >0.902</text>
<text x="298.4" y="325.35" font-size="11" fill="#c4c8cb" textLength="29.2" lengthAdjust="spacingAndGlyphs" >PBCH</text>
<text x="472.5" y="325.35" font-size="11" fill="#c4c8cb" textLength="30.9" lengthAdjust="spacingAndGlyphs" >0.000</text>
<text x="592.7" y="325.35" font-size="11" fill="#cf7a42" textLength="28.9" lengthAdjust="spacingAndGlyphs" >QPSK</text>
<text x="697.5" y="325.35" font-size="11" fill="#c4c8cb" textLength="43.5" lengthAdjust="spacingAndGlyphs" >-44.396</text>
<text x="836.4" y="325.35" font-size="11" fill="#c4c8cb" textLength="31.6" lengthAdjust="spacingAndGlyphs" >0.871</text>
<text x="125" y="351.05" font-size="11" fill="#c4c8cb" textLength="55" lengthAdjust="spacingAndGlyphs" >SS / 0 / 1</text>
<text x="307" y="351.05" font-size="11" fill="#c4c8cb" textLength="20.6" lengthAdjust="spacingAndGlyphs" >PSS</text>
<text x="472.5" y="351.05" font-size="11" fill="#c4c8cb" textLength="30.9" lengthAdjust="spacingAndGlyphs" >0.000</text>
<text x="586.8" y="351.05" font-size="11" fill="#3a64a4" textLength="34.8" lengthAdjust="spacingAndGlyphs" >RBPSK</text>
<text x="697.5" y="351.05" font-size="11" fill="#c4c8cb" textLength="43.5" lengthAdjust="spacingAndGlyphs" >-44.379</text>
<text x="836.4" y="351.05" font-size="11" fill="#c4c8cb" textLength="31.6" lengthAdjust="spacingAndGlyphs" >0.801</text>
<text x="307" y="363.9" font-size="11" fill="#c4c8cb" textLength="20.6" lengthAdjust="spacingAndGlyphs" >SSS</text>
<text x="472.5" y="363.9" font-size="11" fill="#c4c8cb" textLength="30.9" lengthAdjust="spacingAndGlyphs" >0.000</text>
<text x="586.8" y="363.9" font-size="11" fill="#3a64a4" textLength="34.8" lengthAdjust="spacingAndGlyphs" >RBPSK</text>
<text x="697.5" y="363.9" font-size="11" fill="#c4c8cb" textLength="43.5" lengthAdjust="spacingAndGlyphs" >-44.381</text>
<text x="836.4" y="363.9" font-size="11" fill="#c4c8cb" textLength="31.6" lengthAdjust="spacingAndGlyphs" >0.784</text>
<text x="263.6" y="376.75" font-size="11" fill="#c4c8cb" textLength="64" lengthAdjust="spacingAndGlyphs" >PBCH DMRS</text>
<text x="472.5" y="376.75" font-size="11" fill="#c4c8cb" textLength="30.9" lengthAdjust="spacingAndGlyphs" >0.000</text>
<text x="592.7" y="376.75" font-size="11" fill="#cf7a42" textLength="28.9" lengthAdjust="spacingAndGlyphs" >QPSK</text>
<text x="697.5" y="376.75" font-size="11" fill="#c4c8cb" textLength="43.5" lengthAdjust="spacingAndGlyphs" >-44.406</text>
<text x="836.4" y="376.75" font-size="11" fill="#c4c8cb" textLength="31.6" lengthAdjust="spacingAndGlyphs" >0.793</text>
</g>
<line x1="55" y1="327.6" x2="877.5" y2="327.6" stroke="#8a8e90" stroke-width="0.9" />
<rect x="877.5" y="247" width="10.5" height="128.5" fill="#20272b" />
<rect x="877.5" y="247" width="10.5" height="10" fill="#22333c" />
<rect x="877.8" y="257.3" width="10.2" height="9.3" fill="#3a5a6c" />
<path d="M879.8 253.7h6l-3 -3.4z" fill="#f2f5f6"/><path d="M879.8 368.5h6l-3 3.4z" fill="#f2f5f6"/>
<rect x="52" y="380" width="562.3" height="169.3" fill="#1c50a4" />
<rect x="56" y="396" width="555" height="152.5" fill="#0b0f12" />
<text x="56.5" y="392.8" font-size="12" fill="#f2f5f6" textLength="113.2" lengthAdjust="spacingAndGlyphs" >2 Result Summary</text>
<rect x="509.8" y="383" width="45.4" height="12" fill="#3a5565" />
<rect x="555.2" y="383" width="48.8" height="12" fill="#1f9ad8" />
<text x="516.4" y="392.3" font-size="8.5" fill="#c4c8cb" textLength="34.6" lengthAdjust="spacingAndGlyphs" >Selected</text>
<text x="561" y="392.3" font-size="8.5" fill="#f2f5f6" textLength="39" lengthAdjust="spacingAndGlyphs" >Averaged</text>
<rect x="56" y="395.1" width="555" height="1.2" fill="#0a1322" />
<rect x="56" y="396.3" width="543" height="15" fill="#22333c" />
<rect x="56" y="411.3" width="543" height="137.2" fill="#040607" />
<text x="61.5" y="407.3" font-size="11" fill="#f2f5f6" font-weight="bold" textLength="146.2" lengthAdjust="spacingAndGlyphs" >Frame Results Averaged</text>
<text x="322.6" y="407.3" font-size="11" fill="#f2f5f6" font-weight="bold" textLength="31.4" lengthAdjust="spacingAndGlyphs" >Mean</text>
<text x="447.7" y="407.3" font-size="11" fill="#f2f5f6" font-weight="bold" textLength="23.3" lengthAdjust="spacingAndGlyphs" >Max</text>
<text x="569.8" y="407.3" font-size="11" fill="#f2f5f6" font-weight="bold" textLength="19.2" lengthAdjust="spacingAndGlyphs" >Min</text>
<line x1="247" y1="411.5" x2="247" y2="548.5" stroke="#7c8083" stroke-width="0.9" />
<line x1="247" y1="396.3" x2="247" y2="411.5" stroke="#141c21" stroke-width="1" />
<line x1="364.5" y1="411.5" x2="364.5" y2="548.5" stroke="#7c8083" stroke-width="0.9" />
<line x1="364.5" y1="396.3" x2="364.5" y2="411.5" stroke="#141c21" stroke-width="1" />
<line x1="481.7" y1="411.5" x2="481.7" y2="548.5" stroke="#7c8083" stroke-width="0.9" />
<line x1="481.7" y1="396.3" x2="481.7" y2="411.5" stroke="#141c21" stroke-width="1" />
<line x1="56" y1="466.7" x2="599" y2="466.7" stroke="#8a8e90" stroke-width="0.9" />
<line x1="56" y1="508" x2="599" y2="508" stroke="#8a8e90" stroke-width="0.9" />
<line x1="56" y1="535" x2="599" y2="535" stroke="#8a8e90" stroke-width="0.9" />
<text x="61.5" y="422.7" font-size="11" fill="#c4c8cb" textLength="122" lengthAdjust="spacingAndGlyphs" >EVM PDSCH QPSK (%)</text>
<text x="61.5" y="436.4" font-size="11" fill="#c4c8cb" textLength="132" lengthAdjust="spacingAndGlyphs" >EVM PDSCH 16QAM (%)</text>
<text x="61.5" y="450.1" font-size="11" fill="#c4c8cb" textLength="132" lengthAdjust="spacingAndGlyphs" >EVM PDSCH 64QAM (%)</text>
<text x="327.3" y="450.1" font-size="11" fill="#f2f5f6" textLength="26.7" lengthAdjust="spacingAndGlyphs" >0.87</text>
<text x="444.5" y="450.1" font-size="11" fill="#f2f5f6" textLength="26.7" lengthAdjust="spacingAndGlyphs" >0.87</text>
<text x="562.3" y="450.1" font-size="11" fill="#f2f5f6" textLength="26.7" lengthAdjust="spacingAndGlyphs" >0.87</text>
<text x="61.5" y="463.8" font-size="11" fill="#c4c8cb" textLength="139.5" lengthAdjust="spacingAndGlyphs" >EVM PDSCH 256QAM (%)</text>
<text x="61.5" y="477.5" font-size="11" fill="#c4c8cb" textLength="63.5" lengthAdjust="spacingAndGlyphs" >EVM All (%)</text>
<text x="327.3" y="477.5" font-size="11" fill="#f2f5f6" textLength="26.7" lengthAdjust="spacingAndGlyphs" >0.87</text>
<text x="444.5" y="477.5" font-size="11" fill="#f2f5f6" textLength="26.7" lengthAdjust="spacingAndGlyphs" >0.87</text>
<text x="562.3" y="477.5" font-size="11" fill="#f2f5f6" textLength="26.7" lengthAdjust="spacingAndGlyphs" >0.87</text>
<text x="61.5" y="491.2" font-size="11" fill="#c4c8cb" textLength="122.5" lengthAdjust="spacingAndGlyphs" >EVM Phys Channel (%)</text>
<text x="327.3" y="491.2" font-size="11" fill="#f2f5f6" textLength="26.7" lengthAdjust="spacingAndGlyphs" >0.87</text>
<text x="444.5" y="491.2" font-size="11" fill="#f2f5f6" textLength="26.7" lengthAdjust="spacingAndGlyphs" >0.87</text>
<text x="562.3" y="491.2" font-size="11" fill="#f2f5f6" textLength="26.7" lengthAdjust="spacingAndGlyphs" >0.87</text>
<text x="61.5" y="504.9" font-size="11" fill="#c4c8cb" textLength="111.5" lengthAdjust="spacingAndGlyphs" >EVM Phys Signal (%)</text>
<text x="327.3" y="504.9" font-size="11" fill="#f2f5f6" textLength="26.7" lengthAdjust="spacingAndGlyphs" >0.82</text>
<text x="444.5" y="504.9" font-size="11" fill="#f2f5f6" textLength="26.7" lengthAdjust="spacingAndGlyphs" >0.82</text>
<text x="562.3" y="504.9" font-size="11" fill="#f2f5f6" textLength="26.7" lengthAdjust="spacingAndGlyphs" >0.81</text>
<text x="61.5" y="518.6" font-size="11" fill="#c4c8cb" textLength="113.5" lengthAdjust="spacingAndGlyphs" >Frequency Error (Hz)</text>
<text x="322.5" y="518.6" font-size="11" fill="#f2f5f6" textLength="31.5" lengthAdjust="spacingAndGlyphs" >-9.81</text>
<text x="439.7" y="518.6" font-size="11" fill="#f2f5f6" textLength="31.5" lengthAdjust="spacingAndGlyphs" >-9.58</text>
<text x="550.5" y="518.6" font-size="11" fill="#f2f5f6" textLength="38.5" lengthAdjust="spacingAndGlyphs" >-10.04</text>
<text x="61.5" y="532.3" font-size="11" fill="#c4c8cb" textLength="115.5" lengthAdjust="spacingAndGlyphs" >Sampling Error (ppm)</text>
<text x="322.5" y="532.3" font-size="11" fill="#f2f5f6" textLength="31.5" lengthAdjust="spacingAndGlyphs" >-0.01</text>
<text x="444.5" y="532.3" font-size="11" fill="#f2f5f6" textLength="26.7" lengthAdjust="spacingAndGlyphs" >0.09</text>
<text x="557.5" y="532.3" font-size="11" fill="#f2f5f6" textLength="31.5" lengthAdjust="spacingAndGlyphs" >-0.11</text>
<text x="61.5" y="546" font-size="11" fill="#c4c8cb" textLength="71.5" lengthAdjust="spacingAndGlyphs" >Power (dBm)</text>
<text x="315.5" y="546" font-size="11" fill="#f2f5f6" textLength="38.5" lengthAdjust="spacingAndGlyphs" >-15.45</text>
<text x="432.7" y="546" font-size="11" fill="#f2f5f6" textLength="38.5" lengthAdjust="spacingAndGlyphs" >-15.45</text>
<text x="550.5" y="546" font-size="11" fill="#f2f5f6" textLength="38.5" lengthAdjust="spacingAndGlyphs" >-15.45</text>
<rect x="599.7" y="396.3" width="10.9" height="152.2" fill="#1d2a31" />
<rect x="599.7" y="407" width="10.9" height="130" fill="#385868" />
<rect x="610.6" y="396" width="1.8" height="152.5" fill="#0a1224" />
<rect x="612.4" y="396" width="2.1" height="153.3" fill="#1a4792" />
<path d="M602 404h6l-3 -3.4z" fill="#f2f5f6"/><path d="M602 540.5h6l-3 3.4z" fill="#f2f5f6"/>
<rect x="614.8" y="381.6" width="275.5" height="167.2" fill="#0b0f12" />
<rect x="616" y="382" width="273.5" height="13.8" fill="#262c31" />
<rect x="616.5" y="396" width="272.5" height="152" fill="#030405" />
<text x="618" y="392.8" font-size="12" fill="#f2f5f6" textLength="149" lengthAdjust="spacingAndGlyphs" >6 Constellation Diagram</text>
<text x="619.5" y="405.9" font-size="8.2" fill="#c9cdd0" textLength="106" lengthAdjust="spacingAndGlyphs" >Points Measured : 880800</text>
<path d="M616.2 396V548.2H889.3" fill="none" stroke="#444950" stroke-width="0.9"/>
<line x1="752.5" y1="396" x2="752.5" y2="548" stroke="#55595c" stroke-width="0.9" />
<line x1="616.5" y1="472.3" x2="889" y2="472.3" stroke="#55595c" stroke-width="0.9" />
<circle cx="697.8" cy="417.2" r="1.75" fill="#f3d62a"/>
<circle cx="697.6" cy="432.4" r="1.75" fill="#f3d62a"/>
<circle cx="697.7" cy="448.7" r="1.75" fill="#f3d62a"/>
<circle cx="697.5" cy="464.6" r="1.75" fill="#f3d62a"/>
<circle cx="698.0" cy="480.0" r="1.75" fill="#f3d62a"/>
<circle cx="697.8" cy="495.8" r="1.75" fill="#f3d62a"/>
<circle cx="697.7" cy="511.4" r="1.75" fill="#f3d62a"/>
<circle cx="697.5" cy="527.6" r="1.75" fill="#f3d62a"/>
<circle cx="713.7" cy="416.9" r="1.75" fill="#f3d62a"/>
<circle cx="713.2" cy="432.9" r="1.75" fill="#f3d62a"/>
<circle cx="713.7" cy="448.3" r="1.75" fill="#f3d62a"/>
<circle cx="713.6" cy="464.7" r="1.75" fill="#f3d62a"/>
<circle cx="713.8" cy="480.2" r="1.75" fill="#f3d62a"/>
<circle cx="713.5" cy="495.8" r="1.75" fill="#f3d62a"/>
<circle cx="713.3" cy="511.4" r="1.75" fill="#f3d62a"/>
<circle cx="713.2" cy="527.6" r="1.75" fill="#f3d62a"/>
<circle cx="728.9" cy="417.0" r="1.75" fill="#f3d62a"/>
<circle cx="728.9" cy="432.7" r="1.75" fill="#f3d62a"/>
<circle cx="728.7" cy="448.1" r="1.75" fill="#f3d62a"/>
<circle cx="729.4" cy="464.3" r="1.75" fill="#f3d62a"/>
<circle cx="728.7" cy="480.3" r="1.75" fill="#f3d62a"/>
<circle cx="729.2" cy="495.4" r="1.75" fill="#f3d62a"/>
<circle cx="729.1" cy="511.5" r="1.75" fill="#f3d62a"/>
<circle cx="729.0" cy="527.0" r="1.75" fill="#f3d62a"/>
<circle cx="744.5" cy="417.3" r="1.75" fill="#f3d62a"/>
<circle cx="745.2" cy="432.7" r="1.75" fill="#f3d62a"/>
<circle cx="745.0" cy="448.3" r="1.75" fill="#f3d62a"/>
<circle cx="745.1" cy="464.3" r="1.75" fill="#f3d62a"/>
<circle cx="745.3" cy="480.4" r="1.75" fill="#f3d62a"/>
<circle cx="745.2" cy="496.1" r="1.75" fill="#f3d62a"/>
<circle cx="744.7" cy="511.2" r="1.75" fill="#f3d62a"/>
<circle cx="744.7" cy="527.1" r="1.75" fill="#f3d62a"/>
<circle cx="760.4" cy="416.5" r="1.75" fill="#f3d62a"/>
<circle cx="760.7" cy="433.0" r="1.75" fill="#f3d62a"/>
<circle cx="760.7" cy="448.9" r="1.75" fill="#f3d62a"/>
<circle cx="761.0" cy="464.1" r="1.75" fill="#f3d62a"/>
<circle cx="760.8" cy="480.1" r="1.75" fill="#f3d62a"/>
<circle cx="760.4" cy="496.1" r="1.75" fill="#f3d62a"/>
<circle cx="760.5" cy="511.7" r="1.75" fill="#f3d62a"/>
<circle cx="760.8" cy="527.8" r="1.75" fill="#f3d62a"/>
<circle cx="776.3" cy="416.8" r="1.75" fill="#f3d62a"/>
<circle cx="776.2" cy="432.4" r="1.75" fill="#f3d62a"/>
<circle cx="776.6" cy="448.9" r="1.75" fill="#f3d62a"/>
<circle cx="776.0" cy="464.0" r="1.75" fill="#f3d62a"/>
<circle cx="776.0" cy="480.1" r="1.75" fill="#f3d62a"/>
<circle cx="776.5" cy="496.0" r="1.75" fill="#f3d62a"/>
<circle cx="776.5" cy="511.2" r="1.75" fill="#f3d62a"/>
<circle cx="776.4" cy="527.6" r="1.75" fill="#f3d62a"/>
<circle cx="792.1" cy="417.3" r="1.75" fill="#f3d62a"/>
<circle cx="791.6" cy="432.4" r="1.75" fill="#f3d62a"/>
<circle cx="792.2" cy="448.9" r="1.75" fill="#f3d62a"/>
<circle cx="792.1" cy="464.2" r="1.75" fill="#f3d62a"/>
<circle cx="792.1" cy="480.4" r="1.75" fill="#f3d62a"/>
<circle cx="791.7" cy="495.6" r="1.75" fill="#f3d62a"/>
<circle cx="791.8" cy="511.3" r="1.75" fill="#f3d62a"/>
<circle cx="792.0" cy="527.1" r="1.75" fill="#f3d62a"/>
<circle cx="807.7" cy="416.6" r="1.75" fill="#f3d62a"/>
<circle cx="808.0" cy="432.3" r="1.75" fill="#f3d62a"/>
<circle cx="808.1" cy="448.3" r="1.75" fill="#f3d62a"/>
<circle cx="807.5" cy="464.7" r="1.75" fill="#f3d62a"/>
<circle cx="807.7" cy="480.5" r="1.75" fill="#f3d62a"/>
<circle cx="808.2" cy="496.0" r="1.75" fill="#f3d62a"/>
<circle cx="807.6" cy="511.6" r="1.75" fill="#f3d62a"/>
<circle cx="807.6" cy="527.7" r="1.75" fill="#f3d62a"/>
<circle cx="716.2" cy="436" r="1.6" fill="#e07820"/>
<circle cx="788.8" cy="436" r="1.6" fill="#e07820"/>
<circle cx="716.2" cy="508.6" r="1.6" fill="#e07820"/>
<circle cx="788.8" cy="508.6" r="1.6" fill="#e07820"/>
<circle cx="701.6" cy="472.3" r="1.4" fill="#3a7ac0"/>
<circle cx="803.6" cy="472.3" r="1.4" fill="#3a7ac0"/>
<rect x="52" y="549.3" width="920.5" height="26.7" fill="#3a5766" />
<rect x="52" y="549.3" width="562.3" height="2.2" fill="#26557f" />
<rect x="52" y="551.5" width="110" height="22.5" fill="#222d34" />
<rect x="162.5" y="551.5" width="534.5" height="22.5" fill="#0a7f3b" />
<path d="M151.5 562.5h6l-3 3.2z" fill="#8a959b"/>
<path d="M687.5 562h6.4l-3.2 3.4z" fill="#f2f5f6"/>
<text x="395" y="567.3" font-size="9.5" fill="#f2f5f6" font-weight="bold" textLength="61" lengthAdjust="spacingAndGlyphs" >Sync Found</text>
<text x="726" y="567.3" font-size="9.5" fill="#f2f5f6" font-weight="bold" textLength="33" lengthAdjust="spacingAndGlyphs" >Ready</text>
<rect x="787" y="557" width="58.8" height="12.3" fill="#c9ccd6" />
<line x1="793.533" y1="557" x2="793.533" y2="569.3" stroke="#b0b4c0" stroke-width="0.7" />
<line x1="800.067" y1="557" x2="800.067" y2="569.3" stroke="#b0b4c0" stroke-width="0.7" />
<line x1="806.6" y1="557" x2="806.6" y2="569.3" stroke="#b0b4c0" stroke-width="0.7" />
<line x1="813.133" y1="557" x2="813.133" y2="569.3" stroke="#b0b4c0" stroke-width="0.7" />
<line x1="819.667" y1="557" x2="819.667" y2="569.3" stroke="#b0b4c0" stroke-width="0.7" />
<line x1="826.2" y1="557" x2="826.2" y2="569.3" stroke="#b0b4c0" stroke-width="0.7" />
<line x1="832.733" y1="557" x2="832.733" y2="569.3" stroke="#b0b4c0" stroke-width="0.7" />
<line x1="839.267" y1="557" x2="839.267" y2="569.3" stroke="#b0b4c0" stroke-width="0.7" />
<rect x="883.8" y="557.7" width="18.5" height="10.5" fill="#13a354" />
<rect x="883.8" y="566.3" width="18.5" height="1.9" fill="#9eeec8" />
<rect x="883.8" y="557.7" width="18.5" height="1.2" fill="#bfeed6" />
<text x="886" y="566.3" font-size="9.5" fill="#6a1c10" font-weight="bold" textLength="14.5" lengthAdjust="spacingAndGlyphs" font-style="italic">LXI</text>
<rect x="889.3" y="33" width="3.6" height="516.3" fill="#0a0f13" />
<rect x="892.7" y="0" width="79.8" height="549.3" fill="#04080b" />
<text x="916.5" y="21.5" font-size="10" fill="#f2f5f6" font-weight="bold" textLength="30" lengthAdjust="spacingAndGlyphs" >Setup</text>
<rect x="892.7" y="36.1" width="79.8" height="44.5" fill="#36535f" />
<path d="M902 56.0v5.4l-2.8 -2.7z" fill="#f2f5f6"/>
<line x1="905.3" y1="52.4" x2="905.3" y2="65.7" stroke="#e8ecee" stroke-width="0.9" />
<text x="912" y="59.3" font-size="10" fill="#f2f5f6" font-weight="bold" textLength="52.7" lengthAdjust="spacingAndGlyphs" >Reference</text>
<rect x="892.7" y="83.5" width="79.8" height="44.5" fill="#36535f" />
<path d="M902 103.39999999999999v5.4l-2.8 -2.7z" fill="#f2f5f6"/>
<line x1="905.3" y1="99.8" x2="905.3" y2="113.1" stroke="#e8ecee" stroke-width="0.9" />
<text x="909.5" y="106.7" font-size="10" fill="#f2f5f6" font-weight="bold" textLength="56" lengthAdjust="spacingAndGlyphs" >Transducer</text>
<rect x="892.7" y="130.9" width="79.8" height="44.5" fill="#36535f" />
<path d="M902 150.8v5.4l-2.8 -2.7z" fill="#f2f5f6"/>
<line x1="905.3" y1="147.2" x2="905.3" y2="160.5" stroke="#e8ecee" stroke-width="0.9" />
<text x="926.5" y="147.9" font-size="10" fill="#f2f5f6" font-weight="bold" textLength="24" lengthAdjust="spacingAndGlyphs" >User</text>
<text x="911.7" y="161.1" font-size="10" fill="#f2f5f6" font-weight="bold" textLength="53.8" lengthAdjust="spacingAndGlyphs" >Correction</text>
<rect x="892.7" y="178.3" width="79.8" height="44.5" fill="#36535f" />
<path d="M902 198.2v5.4l-2.8 -2.7z" fill="#f2f5f6"/>
<line x1="905.3" y1="194.6" x2="905.3" y2="207.9" stroke="#e8ecee" stroke-width="0.9" />
<text x="912.5" y="201.5" font-size="10" fill="#f2f5f6" font-weight="bold" textLength="52" lengthAdjust="spacingAndGlyphs" >Alignment</text>
<rect x="892.7" y="225.7" width="79.8" height="44.5" fill="#36535f" />
<path d="M902 245.6v5.4l-2.8 -2.7z" fill="#f2f5f6"/>
<line x1="905.3" y1="242" x2="905.3" y2="255.3" stroke="#e8ecee" stroke-width="0.9" />
<text x="919.5" y="248.9" font-size="10" fill="#f2f5f6" font-weight="bold" textLength="37.5" lengthAdjust="spacingAndGlyphs" >Display</text>
<rect x="892.7" y="273.1" width="79.8" height="44.5" fill="#36535f" />
<path d="M902 293.00000000000006v5.4l-2.8 -2.7z" fill="#f2f5f6"/>
<line x1="905.3" y1="289.4" x2="905.3" y2="302.7" stroke="#e8ecee" stroke-width="0.9" />
<text x="911" y="290.1" font-size="10" fill="#f2f5f6" font-weight="bold" textLength="55" lengthAdjust="spacingAndGlyphs" >Parameter</text>
<text x="916" y="303.3" font-size="10" fill="#f2f5f6" font-weight="bold" textLength="45" lengthAdjust="spacingAndGlyphs" >Coupling</text>
<rect x="892.7" y="320.5" width="79.8" height="44.5" fill="#36535f" />
<path d="M902 340.40000000000003v5.4l-2.8 -2.7z" fill="#f2f5f6"/>
<line x1="905.3" y1="336.8" x2="905.3" y2="350.1" stroke="#e8ecee" stroke-width="0.9" />
<text x="911.5" y="337.5" font-size="10" fill="#f2f5f6" font-weight="bold" textLength="53" lengthAdjust="spacingAndGlyphs" >Network +</text>
<text x="919" y="350.7" font-size="10" fill="#f2f5f6" font-weight="bold" textLength="39.5" lengthAdjust="spacingAndGlyphs" >Remote</text>
<rect x="892.7" y="367.9" width="79.8" height="44.5" fill="#36535f" />
<path d="M902 387.80000000000007v5.4l-2.8 -2.7z" fill="#f2f5f6"/>
<line x1="905.3" y1="384.2" x2="905.3" y2="397.5" stroke="#e8ecee" stroke-width="0.9" />
<text x="919" y="384.9" font-size="10" fill="#f2f5f6" font-weight="bold" textLength="39" lengthAdjust="spacingAndGlyphs" >System</text>
<text x="922.5" y="398.1" font-size="10" fill="#f2f5f6" font-weight="bold" textLength="32" lengthAdjust="spacingAndGlyphs" >Config</text>
<rect x="892.7" y="415.3" width="79.8" height="44.5" fill="#36535f" />
<path d="M902 435.20000000000005v5.4l-2.8 -2.7z" fill="#f2f5f6"/>
<line x1="905.3" y1="431.6" x2="905.3" y2="444.9" stroke="#e8ecee" stroke-width="0.9" />
<text x="914" y="432.3" font-size="10" fill="#f2f5f6" font-weight="bold" textLength="48" lengthAdjust="spacingAndGlyphs" >Service +</text>
<text x="918" y="445.5" font-size="10" fill="#f2f5f6" font-weight="bold" textLength="40.5" lengthAdjust="spacingAndGlyphs" >Support</text>
<rect x="892.7" y="460.5" width="79.8" height="18.5" fill="#070b0e" />
<rect x="892.7" y="479.3" width="79.8" height="61.5" fill="#36535f" />
<text x="908.5" y="531.5" font-size="10" fill="#f2f5f6" font-weight="bold" textLength="48.5" lengthAdjust="spacingAndGlyphs" >Overview</text>
<rect x="902.7" y="489.3" width="14" height="9.7" fill="#e9edf0"/>
<rect x="930.7" y="489.3" width="9.5" height="9.7" fill="#e9edf0"/>
<rect x="917.7" y="509" width="11.5" height="8.8" fill="#e9edf0"/>
<rect x="953.3" y="489.3" width="9.2" height="29" fill="#e9edf0"/>
<line x1="954.6" y1="492.5" x2="961.2" y2="492.5" stroke="#36535f" stroke-width="1"/>
<line x1="954.6" y1="495.7" x2="961.2" y2="495.7" stroke="#36535f" stroke-width="1"/>
<line x1="954.6" y1="499.0" x2="961.2" y2="499.0" stroke="#36535f" stroke-width="1"/>
<line x1="954.6" y1="502.2" x2="961.2" y2="502.2" stroke="#36535f" stroke-width="1"/>
<line x1="954.6" y1="505.4" x2="961.2" y2="505.4" stroke="#36535f" stroke-width="1"/>
<line x1="954.6" y1="508.6" x2="961.2" y2="508.6" stroke="#36535f" stroke-width="1"/>
<line x1="954.6" y1="511.9" x2="961.2" y2="511.9" stroke="#36535f" stroke-width="1"/>
<line x1="954.6" y1="515.1" x2="961.2" y2="515.1" stroke="#36535f" stroke-width="1"/>
<line x1="918.5" y1="494.2" x2="926.5" y2="494.2" stroke="#f2f5f6" stroke-width="1.2"/>
<path fill="#f2f5f6" d="M929.5 494.2L925.5 491.4V497.0z"/>
<line x1="942" y1="494.2" x2="949" y2="494.2" stroke="#f2f5f6" stroke-width="1.2"/>
<path fill="#f2f5f6" d="M952 494.2L948 491.4V497.0z"/>
<path fill="none" stroke="#f2f5f6" stroke-width="1.2" d="M935.5 499V501.5Q935.5 503.5 933.5 503.5H905Q903.2 503.5 903.2 505.5V511.5Q903.2 513.5 905 513.5H912"/>
<path fill="#f2f5f6" d="M916.5 513.5L912.5 510.7V516.3z"/>
<path fill="none" stroke="#f2f5f6" stroke-width="1.2" d="M930.5 513.5H934C938 513.5 938 507 942 507H946"/>
<path fill="#f2f5f6" d="M950.5 507L946.5 504.2V509.8z"/>
<rect x="447" y="229" width="49" height="7.5" fill="#8e989e" fill-opacity="0.16"/>
<rect x="447.7" y="375" width="47.5" height="10" fill="#8e989e" fill-opacity="0.2"/>
<rect x="608.6" y="441" width="11.7" height="50" fill="#8e989e" fill-opacity="0.2"/>
<rect x="371" y="147.5" width="7.5" height="48" fill="#8e989e" fill-opacity="0.15"/>
<rect x="648.4" y="147" width="9" height="48.5" fill="#8e989e" fill-opacity="0.18"/>
<path stroke="#aab2b6" stroke-opacity="0.5" stroke-width="1" stroke-dasharray="1 1.6" d="M455 232.7H488M455 380H488"/>
<path d="M603.2 191.6h5l-2.5 4.6z" fill="#35c9e2"/>
<path d="M595 178v8M599 177v9M603 178v7M608 177v8M612 179v6" stroke="#3fc9c0" stroke-opacity="0.35" stroke-width="1.2" fill="none"/>
</svg>
</body></html>
